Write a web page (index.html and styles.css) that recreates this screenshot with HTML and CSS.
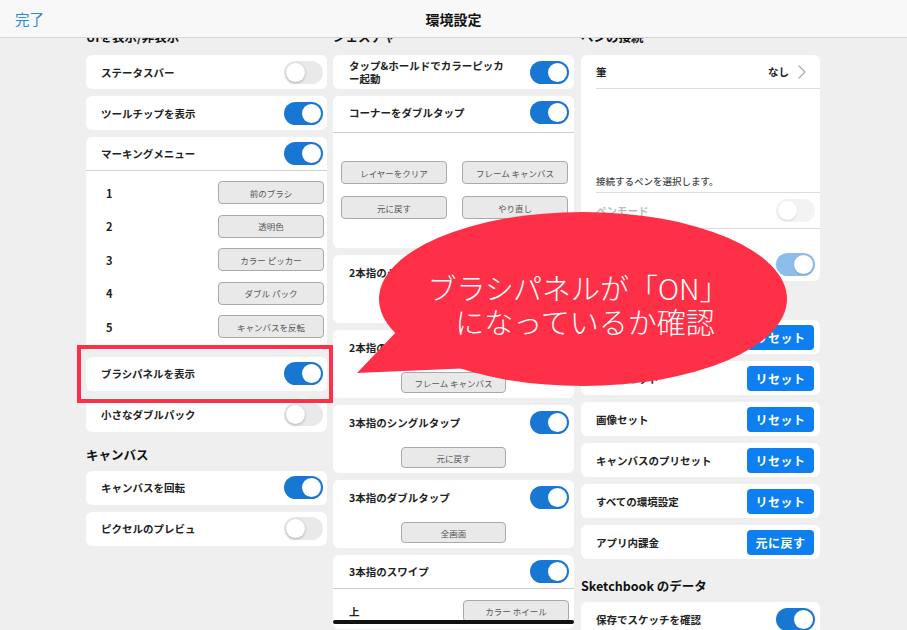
FILE: index.html
```html
<!DOCTYPE html>
<html lang="ja">
<head>
  <meta charset="UTF-8" />
  <title>環境設定</title>
  <link rel="stylesheet" href="styles.css">
</head>
<body>

  <!-- Navigation bar -->
  <header class="topbar">
    <span class="done">完了</span>
    <h1>環境設定</h1>
  </header>

  <main class="settings">

    <!-- Column 1: UI -->
    <section class="col col-1">
      <h2>UIを表示/非表示</h2>
      <div class="card row"><span>ステータスバー</span><i class="switch"></i></div>
      <div class="card row"><span>ツールチップを表示</span><i class="switch on"></i></div>
      <div class="card marking">
        <div class="row head"><span>マーキングメニュー</span><i class="switch on"></i></div>
        <div class="menu-rows">
          <div class="num-row"><b>1</b><button>前のブラシ</button></div>
          <div class="num-row"><b>2</b><button>透明色</button></div>
          <div class="num-row"><b>3</b><button>カラー ピッカー</button></div>
          <div class="num-row"><b>4</b><button>ダブル パック</button></div>
          <div class="num-row"><b>5</b><button>キャンバスを反転</button></div>
        </div>
      </div>
      <div class="card row"><span>ブラシパネルを表示</span><i class="switch on"></i></div>
      <div class="card row"><span>小さなダブルパック</span><i class="switch"></i></div>

      <h2>キャンバス</h2>
      <div class="card row"><span>キャンバスを回転</span><i class="switch on"></i></div>
      <div class="card row"><span>ピクセルのプレビュ</span><i class="switch"></i></div>
    </section>

    <!-- Column 2: gestures -->
    <section class="col col-2">
      <h2>ジェスチャー</h2>
      <div class="card row"><span class="two-line">タップ&amp;ホールドでカラーピッカ<br>ー起動</span><i class="switch on"></i></div>
      <div class="card">
        <div class="row head tall"><span>コーナーをダブルタップ</span><i class="switch on"></i></div>
        <div class="btn-grid">
          <button>レイヤーをクリア</button>
          <button>フレーム キャンバス</button>
          <button>元に戻す</button>
          <button>やり直し</button>
        </div>
      </div>
      <div class="card gesture">
        <div class="row"><span>2本指のシングルタップ</span><i class="switch on"></i></div>
        <button>元に戻す</button>
      </div>
      <div class="card gesture">
        <div class="row"><span>2本指のダブルタップ</span><i class="switch on"></i></div>
        <button>フレーム キャンバス</button>
      </div>
      <div class="card gesture">
        <div class="row"><span>3本指のシングルタップ</span><i class="switch on"></i></div>
        <button>元に戻す</button>
      </div>
      <div class="card gesture">
        <div class="row"><span>3本指のダブルタップ</span><i class="switch on"></i></div>
        <button>全画面</button>
      </div>
      <div class="card">
        <div class="row head"><span>3本指のスワイプ</span><i class="switch on"></i></div>
        <div class="row swipe"><span>上</span><button>カラー ホイール</button></div>
      </div>
    </section>

    <!-- Column 3: pen, reset, data -->
    <section class="col col-3">
      <h2>ペンの接続</h2>
      <div class="card pen">
        <div class="row inset">
          <span>筆</span>
          <span class="value">なし
            <svg width="8" height="14" viewBox="0 0 8 14"><polyline points="1,1 7,7 1,13" fill="none" stroke="#b0b0b0" stroke-width="1.4" stroke-linecap="round" stroke-linejoin="round" /></svg>
          </span>
        </div>
        <div class="pen-info inset">接続するペンを選択します。</div>
        <div class="row inset dim"><span>ペンモード</span><i class="switch faded"></i></div>
        <div class="row pressure"><span>筆圧感知</span><i class="switch on faded"></i></div>
      </div>

      <h2>リセット</h2>
      <div class="card row"><span>ツールバー</span><button class="blue">リセット</button></div>
      <div class="card row"><span>ブラシセット</span><button class="blue">リセット</button></div>
      <div class="card row"><span>画像セット</span><button class="blue">リセット</button></div>
      <div class="card row"><span>キャンバスのプリセット</span><button class="blue">リセット</button></div>
      <div class="card row"><span>すべての環境設定</span><button class="blue">リセット</button></div>
      <div class="card row"><span>アプリ内課金</span><button class="blue">元に戻す</button></div>

      <h2 class="data-title">Sketchbook のデータ</h2>
      <div class="card row"><span>保存でスケッチを確認</span><i class="switch on"></i></div>
    </section>
  </main>

  <!-- Annotation: highlight + speech bubble -->
  <div class="highlight"></div>
  <div class="callout">
    <svg width="450" height="185" viewBox="0 0 450 185">
      <ellipse cx="228" cy="89" rx="204" ry="87" fill="#fe3047" />
      <path d="M2 163 L44 119 L118 158 Z" fill="#fe3047" />
    </svg>
    <p><span>ブラシパネルが「ON」</span><span class="second">になっているか確認</span></p>
  </div>

  <div class="home-bar"></div>

</body>
</html>
```

FILE: styles.css
```css
body {
  margin: 0;
  width: 907px;
  height: 630px;
  overflow: hidden;
  position: relative;
  background: #efefef;
  color: #222;
  font-family: "Noto Sans CJK JP", "Noto Sans", sans-serif;
}

.topbar {
  position: relative;
  z-index: 2;
  height: 37px;
  background: #f8f8f8;
  border-bottom: 1px solid #d6d6d6;
  display: flex;
  align-items: center;
  justify-content: center;
}

.topbar h1 {
  margin: 0;
  font-size: 14px;
  font-weight: 700;
  color: #111;
}

.done {
  position: absolute;
  left: 15px;
  top: 8px;
  font-size: 14.5px;
  color: #2d86e0;
}

.settings {
  display: flex;
  gap: 6px;
  margin-top: -9px;
  padding-left: 86px;
}

.col {
  display: flex;
  flex-direction: column;
  gap: 7px;
}

.col-1, .col-2 { width: 241px; }
.col-3 { width: 239px; padding-left: 1px; }

h2 {
  margin: 8px 0 1px 0;
  font-size: 12.5px;
  line-height: 16px;
  font-weight: 700;
  color: #111;
}

h2:first-child { margin: 0 0 3px 0; }

h2.data-title { margin-top: 12px; }

.card {
  background: #fff;
  border-radius: 6px;
}

.row {
  height: 34px;
  display: flex;
  align-items: center;
  justify-content: space-between;
  padding: 0 4px 0 15px;
  font-size: 10.5px;
  font-weight: 600;
  box-sizing: border-box;
}

.col-2 .row { padding-left: 16px; padding-right: 5px; }
.col-3 .row { padding-right: 5px; }

.two-line {
  line-height: 13px;
}

/* switches */
.switch {
  position: relative;
  width: 39px;
  height: 23px;
  border-radius: 12px;
  background: #e9e9ea;
  flex-shrink: 0;
}

.switch::after {
  content: "";
  position: absolute;
  top: 2px;
  left: 2px;
  width: 19px;
  height: 19px;
  border-radius: 50%;
  background: #fff;
  box-shadow: 0 1px 3px rgba(0, 0, 0, 0.25);
}

.switch.on { background: #1977d4; }
.switch.on::after { left: 18px; box-shadow: none; }
.switch.faded { background: #f3f3f3; }
.switch.faded::after { box-shadow: 0 1px 2px rgba(0, 0, 0, 0.12); }
.switch.on.faded { background: #8dbdeb; }

/* grey option buttons */
button {
  font-family: inherit;
  font-size: 8.5px;
  color: #555;
  background: #e9e9e9;
  border: 1px solid #a9a9a9;
  border-radius: 4px;
  height: 23px;
  width: 106px;
  padding: 0;
}

/* marking menu */
.head {
  border-bottom: 1px solid #cfcfcf;
}

.menu-rows {
  padding: 5px 3px 6px 20px;
}

.num-row {
  height: 33.5px;
  display: flex;
  align-items: center;
  justify-content: space-between;
  font-size: 11px;
}

.num-row b { font-weight: 600; }

/* corner double tap */
.tall {
  height: 37px;
  padding-bottom: 4px;
}

.btn-grid {
  display: grid;
  grid-template-columns: 106px 106px;
  column-gap: 15px;
  row-gap: 12px;
  padding: 28px 6px 29px 8px;
}

/* gesture cards */
.gesture {
  height: 68px;
  display: flex;
  flex-direction: column;
  align-items: center;
}

.gesture .row { width: 100%; }

.gesture button {
  width: 105px;
  height: 21px;
  margin-top: 8px;
}

.swipe {
  height: 40px;
  padding-top: 4px;
}

.swipe button { height: 22px; }

/* pen card */
.pen .inset {
  margin-left: 15px;
  padding-left: 0;
  border-bottom: 1px solid #dcdcdc;
}

.value {
  display: flex;
  align-items: center;
  gap: 9px;
  padding-right: 9px;
}

.pen-info {
  height: 104px;
  box-sizing: border-box;
  display: flex;
  align-items: flex-end;
  padding-bottom: 4px;
  font-size: 9.5px;
  font-weight: 500;
  color: #444;
}

.dim {
  height: 36px;
  color: #bbb;
}

.pressure {
  height: 52px;
  align-items: flex-start;
  padding-top: 24px;
  color: #fff;
}

/* blue reset buttons */
button.blue {
  width: 67px;
  height: 25px;
  background: #0e7ff0;
  border: none;
  color: #fff;
  font-size: 12px;
  font-weight: 700;
  letter-spacing: 0.5px;
  margin-right: 1px;
}

/* annotation overlays */
.highlight {
  position: absolute;
  left: 77px;
  top: 345px;
  width: 248px;
  height: 50px;
  border: 4px solid #fe2f48;
}

.callout {
  position: absolute;
  left: 355px;
  top: 210px;
  width: 450px;
  height: 185px;
}

.callout svg {
  display: block;
}

.callout p {
  position: absolute;
  left: 0;
  top: 60px;
  width: 446px;
  margin: 0;
  text-align: center;
  color: #fff;
  font-size: 29px;
  line-height: 34px;
  font-weight: 300;
}

.callout span {
  display: block;
}

.callout .second {
  padding-left: 14px;
}

.home-bar {
  position: absolute;
  left: 333px;
  top: 620px;
  width: 241px;
  height: 4px;
  border-radius: 2px;
  background: #111;
}
```
